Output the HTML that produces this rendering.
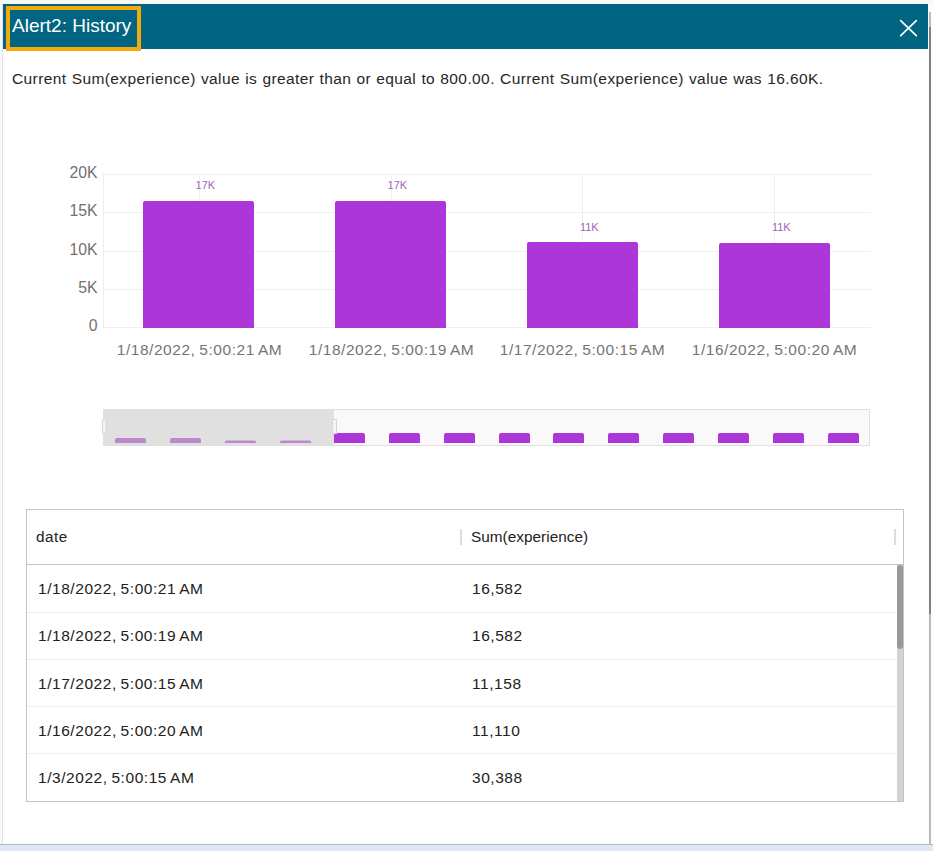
<!DOCTYPE html>
<html><head><meta charset="utf-8">
<style>
*{margin:0;padding:0;box-sizing:border-box}
html,body{width:933px;height:851px;overflow:hidden;background:#f9f9f9;font-family:"Liberation Sans",sans-serif}
.a{position:absolute;white-space:nowrap}
#modal{position:absolute;left:2px;top:4px;width:927px;height:841px;background:#fff;border-left:1px solid #dfe1e6;}
#rstrip{position:absolute;left:928px;top:4px;width:5px;height:840px;background:#fdfdfd}
#bline{position:absolute;left:0;top:844px;width:933px;height:1px;background:#b3b8bf}
#hdr{position:absolute;left:3px;top:4px;width:925px;height:44.5px;background:#006482}
#ttlbox{position:absolute;left:6px;top:6px;width:135px;height:44.6px;border:4px solid #f5aa0c}
#ttl{left:12px;top:15px;font-size:19px;color:#fff;line-height:22px}
#msg{left:12px;top:69px;font-size:15.5px;letter-spacing:0.4px;word-spacing:0.5px;color:#262626;line-height:20px}
#bottom{position:absolute;left:0;top:845px;width:933px;height:6px;background:#dfe7f2}
.sbtrack{position:absolute;left:928.5px;top:12px;width:2.5px;height:832px;background:#bbb}
.sbthumb{position:absolute;left:928.5px;top:27px;width:2.5px;height:587px;background:#808080}
.ylab{font-size:15.8px;letter-spacing:0px;color:#727272;line-height:18px;margin-top:0px;text-align:right;width:60px;left:37.5px}
.xlab{font-size:15.5px;letter-spacing:0.55px;word-spacing:-1px;color:#757575;line-height:20px;text-align:center;width:191px}
.vlab{font-size:11px;color:#9f66bd;margin-left:-0.7px;line-height:12px;text-align:center;width:40px}
.cell{font-size:15.5px;letter-spacing:0.55px;word-spacing:-1px;color:#212121;line-height:20px}
</style></head><body>
<div id="modal"></div><div id="rstrip"></div><div id="bline"></div>
<div id="hdr"></div>
<div id="ttlbox"></div>
<div class="a" id="ttl">Alert2: History</div>
<svg class="a" style="left:895px;top:15px" width="28" height="26" viewBox="0 0 28 26"><path d="M5.7 5.6L21.3 20.7M21.3 5.6L5.7 20.7" stroke="#f4ffff" stroke-width="1.75" stroke-linecap="round" fill="none"/></svg>
<div class="sbtrack"></div><div class="sbthumb"></div>
<div id="bottom"></div>
<div class="a" id="msg">Current Sum(experience) value is greater than or equal to 800.00. Current Sum(experience) value was 16.60K.</div>

<!-- chart -->
<svg class="a" style="left:0;top:0" width="933" height="500">
  <g stroke="#efefef" stroke-width="1">
    <line x1="103.5" y1="174.5" x2="871" y2="174.5"/>
    <line x1="103.5" y1="212.5" x2="871" y2="212.5"/>
    <line x1="103.5" y1="251.5" x2="871" y2="251.5"/>
    <line x1="103.5" y1="289.5" x2="871" y2="289.5"/>
    <line x1="103.5" y1="327.5" x2="871" y2="327.5"/>
    <line x1="103.5" y1="174" x2="103.5" y2="328"/>
    <line x1="199.5" y1="174" x2="199.5" y2="328"/>
    <line x1="391.5" y1="174" x2="391.5" y2="328"/>
    <line x1="582.5" y1="174" x2="582.5" y2="328"/>
    <line x1="774.5" y1="174" x2="774.5" y2="328"/>
  </g>
  <g fill="#ad36d8">
    <path d="M143 328V203a2 2 0 0 1 2-2h107a2 2 0 0 1 2 2V328z"/>
    <path d="M335 328V203a2 2 0 0 1 2-2h107a2 2 0 0 1 2 2V328z"/>
    <path d="M527 328V244a2 2 0 0 1 2-2h107a2 2 0 0 1 2 2V328z"/>
    <path d="M719 328V245a2 2 0 0 1 2-2h107a2 2 0 0 1 2 2V328z"/>
  </g>
  <!-- navigator -->
  <rect x="103.5" y="409.5" width="766" height="36" fill="#f9f9f9" stroke="#dcdcdc"/>
  <g fill="#ad36d8">
    <path d="M334 443V435a2 2 0 0 1 2-2h27a2 2 0 0 1 2 2V443z"/>
    <path d="M389 443V435a2 2 0 0 1 2-2h27a2 2 0 0 1 2 2V443z"/>
    <path d="M444 443V435a2 2 0 0 1 2-2h27a2 2 0 0 1 2 2V443z"/>
    <path d="M499 443V435a2 2 0 0 1 2-2h27a2 2 0 0 1 2 2V443z"/>
    <path d="M553 443V435a2 2 0 0 1 2-2h27a2 2 0 0 1 2 2V443z"/>
    <path d="M608 443V435a2 2 0 0 1 2-2h27a2 2 0 0 1 2 2V443z"/>
    <path d="M663 443V435a2 2 0 0 1 2-2h27a2 2 0 0 1 2 2V443z"/>
    <path d="M718 443V435a2 2 0 0 1 2-2h27a2 2 0 0 1 2 2V443z"/>
    <path d="M773 443V435a2 2 0 0 1 2-2h27a2 2 0 0 1 2 2V443z"/>
    <path d="M828 443V435a2 2 0 0 1 2-2h27a2 2 0 0 1 2 2V443z"/>
  </g>
  <rect x="103" y="409" width="231" height="37" fill="#e0e0e0"/>
  <g fill="#bb88cc">
    <path d="M115 443V440a2 2 0 0 1 2-2h27a2 2 0 0 1 2 2V443z"/>
    <path d="M170 443V440a2 2 0 0 1 2-2h27a2 2 0 0 1 2 2V443z"/>
    <path d="M225 443V442a1.5 1.5 0 0 1 1.5-1.5h28a1.5 1.5 0 0 1 1.5 1.5V443z"/>
    <path d="M280 443V442a1.5 1.5 0 0 1 1.5-1.5h28a1.5 1.5 0 0 1 1.5 1.5V443z"/>
  </g>
  <rect x="103.5" y="409.5" width="766" height="36" fill="none" stroke="#e0e0e0"/>
  <rect x="102.5" y="419.5" width="3.5" height="14" fill="#f6f6f0" stroke="#d8d8d8" stroke-width="1"/>
  <rect x="332.5" y="419.5" width="4" height="14" fill="#f6f6f0" stroke="#d8d8d8" stroke-width="1"/>
</svg>
<div class="a ylab" style="top:164px">20K</div>
<div class="a ylab" style="top:202px">15K</div>
<div class="a ylab" style="top:241px">10K</div>
<div class="a ylab" style="top:279px">5K</div>
<div class="a ylab" style="top:317px">0</div>
<div class="a vlab" style="left:186px;top:179px">17K</div>
<div class="a vlab" style="left:378px;top:179px">17K</div>
<div class="a vlab" style="left:570px;top:221px">11K</div>
<div class="a vlab" style="left:762px;top:221px">11K</div>
<div class="a xlab" style="left:104px;top:340px">1/18/2022, 5:00:21 AM</div>
<div class="a xlab" style="left:296px;top:340px">1/18/2022, 5:00:19 AM</div>
<div class="a xlab" style="left:487px;top:340px">1/17/2022, 5:00:15 AM</div>
<div class="a xlab" style="left:679px;top:340px">1/16/2022, 5:00:20 AM</div>

<!-- table -->
<div style="position:absolute;left:26px;top:509px;width:878px;height:293px;border:1px solid #c4c4c8;background:#fff"></div>
<div style="position:absolute;left:27px;top:563.5px;width:876px;height:1px;background:#c4c4c8"></div>
<div style="position:absolute;left:460px;top:529px;width:2px;height:16px;background:#dcdce0"></div>
<div style="position:absolute;left:894px;top:529px;width:2px;height:16px;background:#dcdce0"></div>
<div style="position:absolute;left:27px;top:611.5px;width:869px;height:1px;background:#f0f0f0"></div>
<div style="position:absolute;left:27px;top:658.5px;width:869px;height:1px;background:#f0f0f0"></div>
<div style="position:absolute;left:27px;top:705.5px;width:869px;height:1px;background:#f0f0f0"></div>
<div style="position:absolute;left:27px;top:752.5px;width:869px;height:1px;background:#f0f0f0"></div>
<div style="position:absolute;left:897px;top:565px;width:6px;height:236px;background:#d3d3d3"></div>
<div style="position:absolute;left:897px;top:565px;width:6px;height:84px;background:#999;border-radius:3px"></div>
<div class="a cell" style="left:36px;top:527px;font-size:15.3px;letter-spacing:0.5px">date</div>
<div class="a cell" style="left:471px;top:527px;font-size:15.3px;letter-spacing:0.05px">Sum(experience)</div>
<div class="a cell" style="left:38px;top:579px">1/18/2022, 5:00:21 AM</div>
<div class="a cell" style="left:472px;top:579px">16,582</div>
<div class="a cell" style="left:38px;top:626px">1/18/2022, 5:00:19 AM</div>
<div class="a cell" style="left:472px;top:626px">16,582</div>
<div class="a cell" style="left:38px;top:674px">1/17/2022, 5:00:15 AM</div>
<div class="a cell" style="left:472px;top:674px">11,158</div>
<div class="a cell" style="left:38px;top:721px">1/16/2022, 5:00:20 AM</div>
<div class="a cell" style="left:472px;top:721px">11,110</div>
<div class="a cell" style="left:38px;top:768px">1/3/2022, 5:00:15 AM</div>
<div class="a cell" style="left:472px;top:768px">30,388</div>
</body></html>
